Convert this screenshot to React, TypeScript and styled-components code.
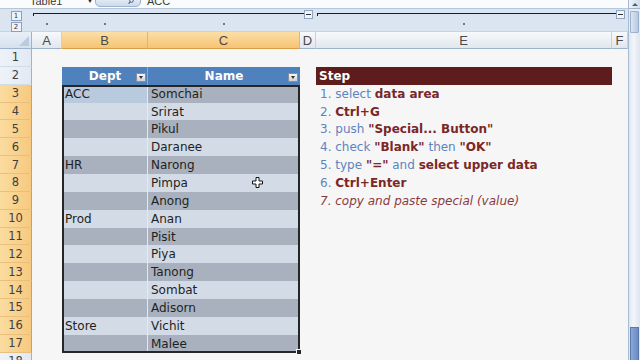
import React from 'react';
import styled, {createGlobalStyle, css} from 'styled-components';

const COLS = '32px 30px 86px 152px 16px 296px 16px';
const ROW_H = 17.87;

const people: [string, string][] = [
  ['ACC', 'Somchai'],
  ['', 'Srirat'],
  ['', 'Pikul'],
  ['', 'Daranee'],
  ['HR', 'Narong'],
  ['', 'Pimpa'],
  ['', 'Anong'],
  ['Prod', 'Anan'],
  ['', 'Pisit'],
  ['', 'Piya'],
  ['', 'Tanong'],
  ['', 'Sombat'],
  ['', 'Adisorn'],
  ['Store', 'Vichit'],
  ['', 'Malee'],
];

type Part = {text: string; kind: 'plain' | 'strong'};

const steps: Part[][] = [
  [{text: '1. select ', kind: 'plain'}, {text: 'data area', kind: 'strong'}],
  [{text: '2. ', kind: 'plain'}, {text: 'Ctrl+G', kind: 'strong'}],
  [{text: '3. push ', kind: 'plain'}, {text: '"Special... Button"', kind: 'strong'}],
  [
    {text: '4. check ', kind: 'plain'},
    {text: '"Blank"', kind: 'strong'},
    {text: ' then ', kind: 'plain'},
    {text: '"OK"', kind: 'strong'},
  ],
  [
    {text: '5. type ', kind: 'plain'},
    {text: '"="', kind: 'strong'},
    {text: ' and ', kind: 'plain'},
    {text: 'select upper data', kind: 'strong'},
  ],
  [{text: '6. ', kind: 'plain'}, {text: 'Ctrl+Enter', kind: 'strong'}],
];

const GlobalStyle = createGlobalStyle`
  html, body {
    margin: 0;
    padding: 0;
    background: #f6f6f6;
    overflow: hidden;
  }
  body {
    font-family: 'DejaVu Sans', sans-serif;
  }
`;

const Window = styled.div`
  display: flex;
  width: 640px;
  height: 360px;
  overflow: hidden;
  background: #f6f6f6;
`;

const Main = styled.div`
  display: flex;
  flex-direction: column;
  width: 628px;
  overflow: hidden;

  & > * {
    flex-shrink: 0;
  }
`;

/* formula bar, cut at the top of the frame */
const FormulaBar = styled.div`
  display: flex;
  align-items: flex-end;
  height: 8px;
  overflow: hidden;
  background: #fafbfd;
  border-bottom: 1px solid #b7c7da;
  font: 11px 'Liberation Sans', sans-serif;
  color: #3a3a3a;
`;

const NameBox = styled.div`
  width: 56px;
  margin-left: 30px;
  line-height: 14px;
`;

const NameArrow = styled.div`
  width: 9px;
  line-height: 14px;
  font-size: 8px;
  color: #222;
`;

const FxButton = styled.div`
  width: 46px;
  height: 14px;
  margin-bottom: 1px;
  border: 1px solid #9cb2cf;
  border-radius: 5px;
  background: linear-gradient(#f4f8fc, #cddbec);
  display: flex;
  justify-content: flex-end;
  align-items: flex-end;
  padding: 0 6px 2px 0;
  box-sizing: border-box;
`;

const FormulaText = styled.div`
  margin-left: 6px;
  line-height: 14px;
`;

/* outline (grouping) strip */
const OutlineBar = styled.div`
  display: grid;
  grid-template-columns: ${COLS};
  grid-template-rows: 11px 11px;
  background: #dbe5f1;
  border-bottom: 1px solid #c4d3e5;
`;

const LevelStack = styled.div`
  grid-row: 1 / 3;
  grid-column: 1;
  display: flex;
  flex-direction: column;
  align-items: center;
  gap: 1px;
  padding-top: 2px;
`;

const LevelButton = styled.div`
  width: 9px;
  height: 8px;
  border: 1px solid #8aa2c2;
  background: #eef3f9;
  font: 7px 'DejaVu Sans', sans-serif;
  color: #333;
  display: flex;
  align-items: center;
  justify-content: center;
`;

const GroupLine = styled.div<{$from: number; $to: number}>`
  grid-row: 1;
  grid-column: ${p => p.$from} / ${p => p.$to};
  align-self: start;
  margin-top: 4px;
  margin-right: -4px;
  margin-left: 1px;
  height: 2px;
  border-top: 1.5px solid #1c1c1c;
  border-left: 1.5px solid #1c1c1c;
`;

const CollapseButton = styled.div<{$col: number}>`
  grid-row: 1;
  grid-column: ${p => p.$col};
  justify-self: center;
  align-self: start;
  margin-top: 1px;
  width: 7px;
  height: 7px;
  border: 1px solid #8ea4c1;
  background: #f1f5fa;
  display: flex;
  align-items: center;
  justify-content: center;

  &::before {
    content: '';
    width: 5px;
    height: 1px;
    background: #333;
  }
`;

const Dot = styled.div<{$col: number}>`
  grid-row: 2;
  grid-column: ${p => p.$col};
  justify-self: center;
  align-self: start;
  margin-top: 3px;
  width: 2px;
  height: 2px;
  background: #6f7780;
`;

/* column letters */
const HeaderRow = styled.div`
  display: grid;
  grid-template-columns: ${COLS};
  height: 17px;
`;

const Corner = styled.div`
  position: relative;
  background: linear-gradient(#e9eff7, #d6e1ee);
  border-right: 1px solid #9db3cc;
  border-bottom: 1px solid #9db3cc;
  box-sizing: border-box;

  &::after {
    content: '';
    position: absolute;
    right: 2px;
    bottom: 2px;
    border-left: 10px solid transparent;
    border-bottom: 10px solid #b7cbe3;
  }
`;

const ColHead = styled.div<{$selected?: boolean}>`
  display: flex;
  align-items: center;
  justify-content: center;
  box-sizing: border-box;
  font: 13px 'Liberation Sans', sans-serif;
  color: #4a4a4a;
  border-right: 1px solid ${p => (p.$selected ? '#e3b46a' : '#c6d2df')};
  border-bottom: 1px solid ${p => (p.$selected ? '#d99d45' : '#9db3cc')};
  background: ${p =>
    p.$selected
      ? 'linear-gradient(#fbdfa6, #f6c374)'
      : 'linear-gradient(#f7f9fb, #e1e7ee)'};
`;

/* sheet body */
const Sheet = styled.div`
  display: grid;
  grid-template-columns: ${COLS};
  grid-auto-rows: ${ROW_H}px;
`;

const RowHead = styled.div<{$selected?: boolean}>`
  display: flex;
  align-items: center;
  justify-content: center;
  box-sizing: border-box;
  font: 11.5px 'DejaVu Sans', sans-serif;
  color: #3f3f3f;
  border-right: 1px solid ${p => (p.$selected ? '#d99d45' : '#9db3cc')};
  border-bottom: 1px solid ${p => (p.$selected ? '#e8bf7c' : '#d2dce8')};
  background: ${p =>
    p.$selected
      ? 'linear-gradient(90deg, #fbdc9f, #f7c97f)'
      : 'linear-gradient(90deg, #eef3f9, #e1e9f3)'};
`;

const Blank = styled.div``;

const TableHead = styled.div<{$first?: boolean}>`
  display: flex;
  align-items: center;
  padding-left: 12px;
  padding-right: 2px;
  background: #4f81bd;
  color: #fff;
  font: bold 12px 'DejaVu Sans', sans-serif;
  box-shadow: ${p => (p.$first ? 'inset -1px 0 0 #86a8d3' : 'none')};
`;

const HeadLabel = styled.span`
  flex: 1;
  text-align: center;
`;

const FilterButton = styled.span`
  width: 8px;
  height: 7px;
  margin-top: 3px;
  border: 1px solid #8e8e8e;
  background: linear-gradient(#f6f6f6, #cfd3d8);
  display: flex;
  align-items: center;
  justify-content: center;

  &::before {
    content: '';
    border-left: 2.5px solid transparent;
    border-right: 2.5px solid transparent;
    border-top: 3px solid #333;
  }
`;

type Edges = {$top?: boolean; $bottom?: boolean; $left?: boolean; $right?: boolean};

const edgeShadow = ({$top, $bottom, $left, $right}: Edges) => {
  const parts: string[] = [];
  if ($top) parts.push('inset 0 2px 0 #262626');
  if ($bottom) parts.push('inset 0 -2px 0 #262626');
  if ($left) parts.push('inset 2px 0 0 #262626');
  if ($right) parts.push('inset -2px 0 0 #262626');
  if ($left) parts.push('inset -1px 0 0 #e4e9f0');
  return parts.length ? parts.join(', ') : 'none';
};

const DataCell = styled.div<Edges & {$dark: boolean; $active?: boolean}>`
  position: relative;
  display: flex;
  align-items: center;
  padding-left: 3px;
  font: 12px 'DejaVu Sans', sans-serif;
  color: #1f1f1f;
  white-space: nowrap;
  background: ${p =>
    p.$active ? '#b9cadf' : p.$dark ? '#a8b1bd' : '#d3dbe6'};
  box-shadow: ${p => edgeShadow(p)};

  ${p =>
    p.$bottom &&
    p.$right &&
    css`
      &::after {
        content: '';
        position: absolute;
        right: -2px;
        bottom: -2px;
        width: 4px;
        height: 4px;
        background: #262626;
        border: 1px solid #f6f6f6;
      }
    `}
`;

const CrossCursor = styled.svg`
  position: absolute;
  left: 104px;
  top: 3px;
`;

const StepHead = styled.div`
  display: flex;
  align-items: center;
  padding-left: 3px;
  background: #5f1c1c;
  color: #fff;
  font: bold 12px 'DejaVu Sans', sans-serif;
`;

const StepLine = styled.div<{$note?: boolean}>`
  display: flex;
  align-items: center;
  padding-left: 4px;
  white-space: nowrap;
  font: ${p => (p.$note ? 'italic' : 'normal')} 12px 'DejaVu Sans', sans-serif;
  color: ${p => (p.$note ? '#8a3a3d' : '#5d84bf')};
`;

const Plain = styled.span`
  white-space: pre;
`;

const Strong = styled.span`
  white-space: pre;
  font-weight: bold;
  color: #7a2727;
`;

/* vertical scroll bar */
const ScrollBar = styled.div`
  display: flex;
  flex-direction: column;
  width: 12px;
  background: #e5ecf5;
  border-left: 1px solid #a9bbd3;
  box-sizing: border-box;
`;

const ScrollArrow = styled.div`
  height: 8px;
  flex-shrink: 0;
  background: linear-gradient(90deg, #eef3f9, #cfdcec);
  border-bottom: 1px solid #9fb3ce;
  display: flex;
  justify-content: center;
  align-items: flex-end;

  &::before {
    content: '';
    margin-bottom: 2px;
    border-left: 3px solid transparent;
    border-right: 3px solid transparent;
    border-bottom: 3px solid #4d5f78;
  }
`;

const SplitBox = styled.div`
  height: 20px;
  flex-shrink: 0;
  margin: 2px 1px 0;
  background: linear-gradient(90deg, #dbe5f2, #b7c9e1);
  border: 1px solid #9cb1cd;
  border-radius: 1px;
`;

const Track = styled.div`
  flex: 1;
  display: flex;
  flex-direction: column;
  justify-content: flex-end;
  background: linear-gradient(90deg, #dfe6f0, #f2f5fa 40%, #dde5f0);
`;

const Thumb = styled.div`
  height: 32px;
  margin: 0 1px;
  background: linear-gradient(90deg, #8aa8d8, #6a8cc5);
  border: 1px solid #5a78ac;
  border-bottom: none;
`;

const outlineCols = [2, 3, 4, 6];

export default function App() {
  return (
    <>
      <GlobalStyle />
      <Window>
        <Main>
          <FormulaBar>
            <NameBox>Table1</NameBox>
            <NameArrow>▼</NameArrow>
            <FxButton>
              <svg width="6" height="6" viewBox="0 0 6 6">
                <circle cx="3.5" cy="2.5" r="1.8" fill="none" stroke="#4c5f7a" strokeWidth="1" />
                <path d="M2.2 3.8L0.6 5.6" stroke="#4c5f7a" strokeWidth="1.2" />
              </svg>
            </FxButton>
            <FormulaText>ACC</FormulaText>
          </FormulaBar>

          <OutlineBar>
            <LevelStack>
              <LevelButton>1</LevelButton>
              <LevelButton>2</LevelButton>
            </LevelStack>
            <GroupLine $from={2} $to={5} />
            <CollapseButton $col={5} />
            <GroupLine $from={6} $to={7} />
            <CollapseButton $col={7} />
            {outlineCols.map(c => (
              <Dot key={c} $col={c} />
            ))}
          </OutlineBar>

          <HeaderRow>
            <Corner />
            <ColHead>A</ColHead>
            <ColHead $selected>B</ColHead>
            <ColHead $selected>C</ColHead>
            <ColHead>D</ColHead>
            <ColHead>E</ColHead>
            <ColHead>F</ColHead>
          </HeaderRow>

          <Sheet>
            <RowHead>1</RowHead>
            <Blank />
            <Blank />
            <Blank />
            <Blank />
            <Blank />
            <Blank />

            <RowHead>2</RowHead>
            <Blank />
            <TableHead $first>
              <HeadLabel>Dept</HeadLabel>
              <FilterButton />
            </TableHead>
            <TableHead>
              <HeadLabel>Name</HeadLabel>
              <FilterButton />
            </TableHead>
            <Blank />
            <StepHead>Step</StepHead>
            <Blank />

            {people.map(([dept, name], i) => {
              const row = i + 3;
              const edges = {$top: i === 0, $bottom: i === people.length - 1};
              const dark = i % 2 === 0;
              const step = steps[i];
              return (
                <React.Fragment key={row}>
                  <RowHead $selected>{row}</RowHead>
                  <Blank />
                  <DataCell {...edges} $left $dark={dark} $active={i === 0}>
                    {dept}
                  </DataCell>
                  <DataCell {...edges} $right $dark={dark}>
                    {name}
                    {row === 8 && (
                      <CrossCursor width="11" height="11" viewBox="0 0 11 11">
                        <path
                          d="M4 0.5h3v3.5h3.5v3h-3.5v3.5h-3v-3.5h-3.5v-3h3.5z"
                          fill="#fff"
                          stroke="#111"
                          strokeWidth="1"
                        />
                      </CrossCursor>
                    )}
                  </DataCell>
                  <Blank />
                  {step ? (
                    <StepLine>
                      {step.map((p, k) =>
                        p.kind === 'strong' ? (
                          <Strong key={k}>{p.text}</Strong>
                        ) : (
                          <Plain key={k}>{p.text}</Plain>
                        ),
                      )}
                    </StepLine>
                  ) : i === steps.length ? (
                    <StepLine $note>7. copy and paste special (value)</StepLine>
                  ) : (
                    <Blank />
                  )}
                  <Blank />
                </React.Fragment>
              );
            })}

            <RowHead>18</RowHead>
          </Sheet>
        </Main>

        <ScrollBar>
          <ScrollArrow />
          <SplitBox />
          <Track>
            <Thumb />
          </Track>
        </ScrollBar>
      </Window>
    </>
  );
}
